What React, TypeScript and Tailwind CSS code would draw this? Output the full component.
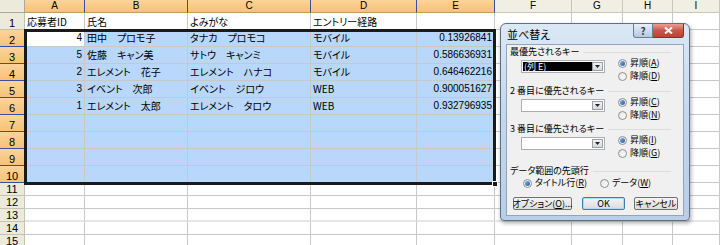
import React from 'react';

const colLetters = ['A', 'B', 'C', 'D', 'E', 'F', 'G', 'H', 'I'];

const data: string[][] = [
  ['応募者ID', '氏名', 'よみがな', 'エントリー経路', ''],
  ['4', '田中　プロモ子', 'タナカ　プロモコ', 'モバイル', '0.13926841'],
  ['5', '佐藤　キャン美', 'サトウ　キャンミ', 'モバイル', '0.586636931'],
  ['2', 'エレメント　花子', 'エレメント　ハナコ', 'モバイル', '0.646462216'],
  ['3', 'イベント　次郎', 'イベント　ジロウ', 'WEB', '0.900051627'],
  ['1', 'エレメント　太郎', 'エレメント　タロウ', 'WEB', '0.932796935'],
];

const jp = "font-['MS_PGothic','Noto_Sans_CJK_JP',sans-serif] [font-feature-settings:'palt']";
const latin = "font-['Liberation_Sans','Noto_Sans_CJK_JP',sans-serif]";

const Radio: React.FC<{ checked?: boolean }> = ({ checked }) => (
  <span className="w-[9px] h-[9px] rounded-full border border-[#8e8f8f] bg-gradient-to-br from-[#e6e6e6] to-[#fbfbfb] flex items-center justify-center shrink-0">
    {checked && <span className="w-[5px] h-[5px] rounded-full bg-gradient-to-br from-[#7bb5e8] to-[#1a59a8]" />}
  </span>
);

const RadioLabel: React.FC<{ checked?: boolean; text: string; acc: string }> = ({ checked, text, acc }) => (
  <div className="flex items-center gap-[3px] h-[10px]">
    <Radio checked={checked} />
    <span className="text-[9px] leading-[10px] text-black whitespace-nowrap">
      {text}(<span className="underline">{acc}</span>)
    </span>
  </div>
);

const Combo: React.FC<{ value?: string }> = ({ value }) => (
  <div className="w-[84px] h-[13px] border border-[#abadb3] bg-white flex p-px">
    <div className={`flex-1 flex items-center pl-px text-[9px] leading-[9px] ${value ? 'bg-black text-white' : ''}`}>
      {value}
    </div>
    <div className="w-[11px] h-full border border-[#9aa0a8] bg-gradient-to-b from-[#f3f3f3] to-[#d9d9d9] flex items-center justify-center">
      <svg width="5" height="3" viewBox="0 0 5 3">
        <path d="M0 0h5L2.5 3z" fill="#222" />
      </svg>
    </div>
  </div>
);

const GroupLabel: React.FC<{ text: string }> = ({ text }) => (
  <div className="h-[10px] flex items-center gap-[4px] pr-[12px]">
    <span className="text-[9px] leading-[10px] text-black whitespace-nowrap">{text}</span>
    <div className="flex-1 h-px bg-[#dcdcdc]" />
  </div>
);

const KeySection: React.FC<{ label: string; value?: string; a: string; d: string; h: string }> = ({ label, value, a, d, h }) => (
  <div className={h}>
    <GroupLabel text={label} />
    <div className="flex mt-[3px]">
      <div className="ml-[11px]">
        <Combo value={value} />
      </div>
      <div className="ml-[13px] -mt-[2px] flex flex-col gap-[3px]">
        <RadioLabel checked text="昇順" acc={a} />
        <RadioLabel text="降順" acc={d} />
      </div>
    </div>
  </div>
);

const Btn: React.FC<{ w: string; def?: boolean; children: React.ReactNode }> = ({ w, def, children }) => (
  <div
    className={`${w} h-[13px] rounded-[2px] border ${def ? 'border-[#3c7fb1] shadow-[inset_0_0_0_1px_#a8dcf6]' : 'border-[#707070]'} bg-gradient-to-b from-[#f4f4f4] to-[#dcdcdc] flex items-center justify-center text-[9px] leading-[9px] text-black whitespace-nowrap`}
  >
    {children}
  </div>
);

const SortDialog: React.FC = () => (
  <div className={`absolute left-[500px] top-[23px] w-[190px] h-[198px] rounded-t-[6px] rounded-b-[4px] border border-[#5f6e80] bg-gradient-to-b from-[#dbe8f5] via-[#c3d6ec] to-[#b9cee7] shadow-[1px_2px_4px_rgba(0,0,0,0.35)] flex flex-col ${jp}`}>
    <div className="h-[20px] flex items-start">
      <span className="pl-[6px] pt-[4px] text-[11px] leading-[12px] text-black">並べ替え</span>
      <div className="ml-auto mr-[5px] flex">
        <div className="w-[20px] h-[14px] rounded-bl-[3px] border border-t-0 border-[#6d7d91] bg-gradient-to-b from-[#e8eff7] to-[#b7c9de] flex items-center justify-center text-[10px] leading-[10px] font-bold text-[#2d3f5a]">
          ?
        </div>
        <div className="w-[31px] h-[14px] rounded-br-[3px] border border-l-0 border-t-0 border-[#6d3a35] bg-gradient-to-b from-[#e7a195] via-[#c8574a] to-[#c4402f] flex items-center justify-center">
          <svg width="9" height="7" viewBox="0 0 9 7">
            <path d="M1 0.5L8 6.5M8 0.5L1 6.5" stroke="#fff" strokeWidth="2" />
          </svg>
        </div>
      </div>
    </div>
    <div className="mx-[5px] mb-[4px] flex-1 bg-[#f0f0f0] border border-[#8fa5c0] pl-[3px] pt-[2px]">
      <KeySection h="h-[39px]" label="最優先されるキー" value="(列 E)" a="A" d="D" />
      <KeySection h="h-[38px]" label="2 番目に優先されるキー" a="C" d="N" />
      <KeySection h="h-[42px]" label="3 番目に優先されるキー" a="I" d="G" />
      <GroupLabel text="データ範囲の先頭行" />
      <div className="flex items-center mt-[2px] ml-[13px] gap-[13px]">
        <RadioLabel checked text="タイトル行" acc="R" />
        <RadioLabel text="データ" acc="W" />
      </div>
      <div className="flex mt-[9px] ml-[3px]">
        <Btn w="w-[59px]">
          オプション(<span className="underline">O</span>)...
        </Btn>
        <div className="ml-[10px]">
          <Btn w="w-[43px]" def>
            OK
          </Btn>
        </div>
        <div className="ml-[9px]">
          <Btn w="w-[44px]">キャンセル</Btn>
        </div>
      </div>
    </div>
  </div>
);

export default function App() {
  const sheetRows = Array.from({ length: 15 }, (_, i) => i + 1);

  return (
    <div className="relative w-[720px] h-[245px] overflow-hidden bg-white">
      <div className="grid grid-cols-[25px_60px_103px_123px_106px_78px_77px_51px_50px_47px]">
        {/* column headers */}
        <div className="h-[13px] bg-[#ebeadb] border-r border-b border-[#aca899]" />
        {colLetters.map((c, i) => (
          <div
            key={c}
            className={`h-[13px] flex items-center justify-center text-[10px] leading-[10px] text-black ${latin} border-b ${
              i < 5
                ? 'bg-gradient-to-b from-[#fcd39a] to-[#f6c276] border-r border-r-[#3c4f9e] border-b-[#c89a5a]'
                : 'bg-[#f1efe4] border-r border-[#c9c7b8]'
            }`}
          >
            {c}
          </div>
        ))}

        {sheetRows.map((r) => {
          const big = r <= 10;
          const selRow = r >= 2 && r <= 10;
          const rowData = data[r - 1] || [];
          return (
            <React.Fragment key={r}>
              <div
                className={`${big ? 'h-[17px]' : 'h-[13px]'} flex items-end justify-center text-[11px] leading-[12px] text-black ${latin} border-r ${
                  selRow
                    ? 'bg-gradient-to-b from-[#fcd39a] to-[#f6c276] border-b border-b-[#3c4f9e] border-r-[#c89a5a]'
                    : 'bg-[#ebeadb] border-b border-[#c5c2b2]'
                }`}
              >
                {r}
              </div>
              {Array.from({ length: 9 }, (_, c) => {
                const sel = selRow && c < 5 && !(r === 2 && c === 0);
                const v = rowData[c] || '';
                const right = r > 1 && (c === 0 || c === 4);
                return (
                  <div
                    key={c}
                    className={`${big ? 'h-[17px]' : 'h-[13px]'} border-r border-b ${
                      r === 13 ? 'border-b-[#e6e6e6] border-b-2' : 'border-b-[#c8c8c8]'
                    } border-r-[#c8c8c8] ${sel ? 'bg-[#b8d7fb]' : 'bg-white'} flex items-end overflow-hidden whitespace-nowrap text-[10px] leading-[12px] text-black ${
                      right ? `justify-end pr-[2px] ${latin}` : `pl-[2px] ${jp}`
                    } ${r === 1 ? 'pb-[1px]' : 'pb-[2px]'}`}
                  >
                    {v}
                  </div>
                );
              })}
            </React.Fragment>
          );
        })}
      </div>

      {/* selection outline A2:E10 */}
      <div className="absolute left-[24px] top-[29px] w-[472px] h-[156px] border-[3px] border-[#1a1a1a]" />
      <div className="absolute left-[492px] top-[181px] w-[6px] h-[6px] bg-[#1a1a1a] border border-white" />

      <SortDialog />
    </div>
  );
}
